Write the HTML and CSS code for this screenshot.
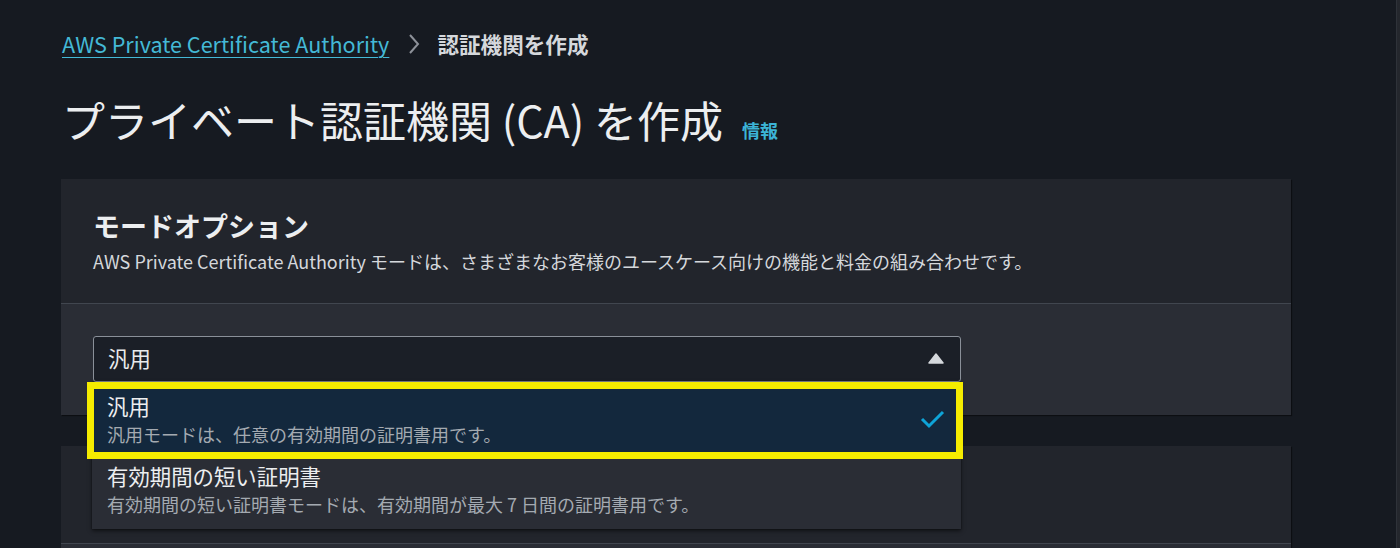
FILE: index.html
```html
<!DOCTYPE html>
<html lang="ja">
<head>
<meta charset="utf-8">
<title>プライベート認証機関 (CA) を作成</title>
<link rel="stylesheet" href="styles.css">
</head>
<body>
<div class="page">
  <main class="main">
    <nav class="crumbs">
      <a class="crumb-link" href="#">AWS Private Certificate Authority</a>
      <svg class="crumb-sep" width="14" height="22" viewBox="0 0 14 22"><path d="M3 2 L11 11 L3 20" fill="none" stroke="#8d9199" stroke-width="2"/></svg>
      <span class="crumb-current">認証機関を作成</span>
    </nav>
    <h1 class="title">プライベート認証機関 (CA) を作成<a class="info" href="#">情報</a></h1>

    <section class="card card-first">
      <header class="card-head">
        <h2 class="card-title">モードオプション</h2>
        <p class="card-desc">AWS Private Certificate Authority モードは、さまざまなお客様のユースケース向けの機能と料金の組み合わせです。</p>
      </header>
      <div class="card-body">
        <div class="select-wrap">
          <div class="select">
            <span class="select-value">汎用</span>
            <svg class="caret" width="16" height="11" viewBox="0 0 16 11"><path d="M8 1 L15 10 L1 10 Z" fill="#d5d8dc" stroke="#d5d8dc" stroke-width="1.5" stroke-linejoin="round"/></svg>
          </div>
          <ul class="menu">
            <li class="option option-selected">
              <div class="option-text">
                <div class="option-title">汎用</div>
                <div class="option-desc">汎用モードは、任意の有効期間の証明書用です。</div>
              </div>
              <svg class="check" width="26" height="20" viewBox="0 0 26 20"><path d="M2 9 L9 16 L23 2" fill="none" stroke="#0ea4d8" stroke-width="3"/></svg>
              <span class="highlight"></span>
            </li>
            <li class="option">
              <div class="option-text">
                <div class="option-title">有効期間の短い証明書</div>
                <div class="option-desc">有効期間の短い証明書モードは、有効期間が最大 7 日間の証明書用です。</div>
              </div>
            </li>
          </ul>
        </div>
      </div>
    </section>

    <section class="card">
      <header class="card-head card-head-empty"></header>
      <div class="card-body card-body-empty"></div>
    </section>
  </main>
  <div class="scrollbar"></div>
</div>
</body>
</html>
```

FILE: styles.css
```css
* { box-sizing: border-box; }
html, body { margin: 0; padding: 0; }
body {
  background: #161a21;
  color: #e9ebed;
  font-family: "Noto Sans CJK JP", "Noto Sans", sans-serif;
  height: 548px;
  overflow: hidden;
}
.page {
  display: flex;
  height: 548px;
}
.main {
  flex: 1;
  padding-left: 61px;
}
.scrollbar {
  width: 4px;
  background: #24272d;
  border-left: 1px solid #2e3239;
}
.crumbs {
  display: flex;
  align-items: center;
  height: 30px;
  margin-top: 29px;
  font-size: 21.6px;
  line-height: 30px;
}
.crumb-link {
  color: #44b9d6;
  text-decoration: underline;
  text-underline-offset: 4px;
  text-decoration-thickness: 1px;
  padding-left: 1px;
}
.crumb-sep {
  margin: 0 16px 0 18px;
}
.crumb-current {
  color: #d5d8dc;
  font-weight: 700;
}
.title {
  margin: 34px 0 0 0;
  height: 52px;
  font-size: 43px;
  line-height: 52px;
  font-weight: 400;
  color: #eceef0;
  padding-left: 1px;
  white-space: nowrap;
}
.info {
  color: #3cb4d6;
  font-size: 18px;
  line-height: 20px;
  font-weight: 700;
  text-decoration: none;
  margin-left: 19px;
}
.card {
  width: 1230px;
  margin-top: 31px;
  background: #22252c;
  box-shadow: 1px 1px 1px rgba(0, 0, 0, 0.45);
}
.card-first {
  margin-top: 34px;
}
.card-head {
  padding: 29px 32px 29px 32px;
  border-bottom: 1px solid #41464f;
}
.card-title {
  margin: 0;
  font-size: 27px;
  line-height: 36px;
  font-weight: 700;
  color: #eceef0;
}
.card-desc {
  margin: 4px 0 0 0;
  font-size: 18px;
  line-height: 26px;
  color: #d5d8dc;
}
.card-body {
  background: #2a2d35;
  padding: 32px 32px 33px 32px;
}
.card-head-empty { height: 98px; }
.card-body-empty { height: 60px; }
.select-wrap {
  position: relative;
  width: 868px;
}
.select {
  height: 46px;
  display: flex;
  align-items: center;
  justify-content: space-between;
  padding: 0 16px 3px 14px;
  background: #1b1f27;
  border: 1px solid #8a9099;
  border-radius: 3px;
  font-size: 21.4px;
  color: #e9ebed;
}
.caret { margin-top: 1px; }
.menu {
  position: absolute;
  z-index: 10;
  top: 46px;
  left: -1px;
  width: 869px;
  margin: 0;
  padding: 0 0 7px 0;
  list-style: none;
  background: #2a2d35;
  box-shadow: 0 2px 4px rgba(0, 0, 0, 0.55), 0 0 1px rgba(0, 0, 0, 0.6);
}
.option {
  position: relative;
  display: flex;
  align-items: center;
  justify-content: space-between;
  height: 70px;
  padding: 10px 15px 4px 15px;
}
.option-selected {
  background: #13283d;
}
.option-title {
  font-size: 21.4px;
  line-height: 28px;
  color: #eceef0;
}
.option-desc {
  font-size: 18px;
  line-height: 28px;
  color: #a4aab1;
}
.highlight {
  position: absolute;
  left: -5px;
  top: 0;
  right: -2px;
  bottom: -7px;
  border: 7px solid #f5ec00;
  pointer-events: none;
}
```
